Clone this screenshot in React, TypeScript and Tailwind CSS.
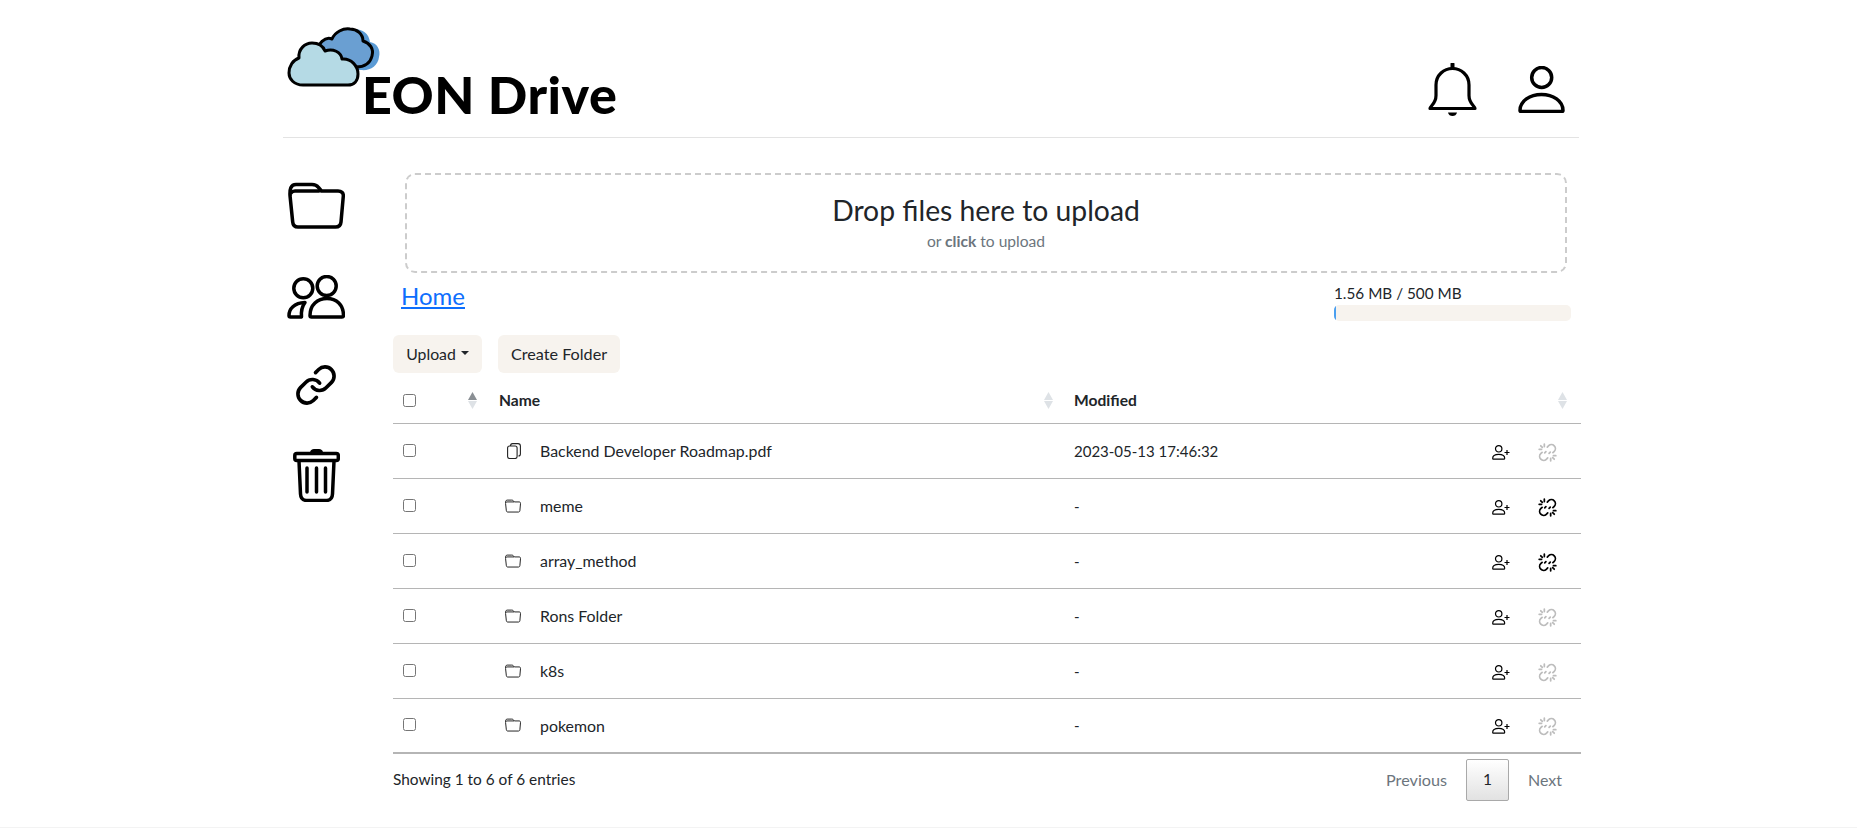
import React from "react";

function CloudLogo() {
  return (
    <svg width="96" height="64" viewBox="0 0 96 64" className="shrink-0">
      <path d="M36 30c-3-8 3-17 12-15 3-7 10-12 19-11 9 0 15 5 16 13 7 1 11 8 9 15-1 9-9 14-18 13H45z" fill="#5b9bd5" />
      <path d="M31 27c-1-8 7-16 14-13 3-7 11-11 18-10 7 0 13 5 13 12 7 2 11 8 9 15-2 8-8 11-16 11" fill="#6a9fd2" stroke="#000" strokeWidth="3" strokeLinejoin="round" />
      <path d="M16 60C7 60 2 54 2 48c0-7 4-13 10-15-1-9 6-15 13-15 6 0 11 3 13 8 8-3 16 1 17 8 9-1 16 7 16 15 0 7-4 11-10 11z" fill="#b5dae5" stroke="#000" strokeWidth="3" strokeLinejoin="round" />
    </svg>
  );
}

function Bell() {
  return (
    <svg width="50" height="54" viewBox="0 0 50 54" fill="none" stroke="#000" strokeWidth="3.200" strokeLinejoin="round" strokeLinecap="round">
      <path d="M2 45.500h45c0-2.500-6-4.500-6-13V22C41 12 33 5.500 24.500 5.500S8 12 8 22v10.500c0 8.500-6 10.500-6 13z" />
      <path d="M24.500 1v4" strokeWidth="4" />
      <path d="M20 49.500h9c-.5 2.500-2.300 3.500-4.500 3.500S20.500 52 20 49.500z" fill="#000" stroke="none" />
    </svg>
  );
}

function Person() {
  return (
    <svg width="47" height="47" viewBox="0 0 47 47" fill="none" stroke="#000" strokeWidth="3.500" strokeLinejoin="round">
      <circle cx="23.700" cy="11.500" r="10" />
      <path d="M2 44.500c0-9.500 10-16 21.500-16s21.500 6.500 21.500 16c0 .5-.5 1-1 1H3c-.5 0-1-.5-1-1z" />
    </svg>
  );
}

function FolderBig({ w, h, sw, color = "#000" }: { w: number; h: number; sw: number; color?: string }) {
  return (
    <svg width={w} height={h} viewBox="0 0 57 46" fill="none" stroke={color} strokeWidth={sw} strokeLinejoin="round" strokeLinecap="round">
      <path d="M2 13C1.700 7 2.500 2 8 2h16c3 0 5 1 6.500 3l3 3.500H50c3.500 0 5.500 2 5.300 5l-2.300 26c-.3 3.500-2.500 5-5.500 5H10c-3 0-5-1.500-5.300-5z" />
      <path d="M3 10.500c1-1.500 2.500-2 4-2h24" />
    </svg>
  );
}

function Users() {
  return (
    <svg width="58" height="44" viewBox="0 0 58 44" fill="none" stroke="#000" strokeWidth="3.500" strokeLinejoin="round">
      <circle cx="16.300" cy="13.300" r="9.500" />
      <circle cx="39.700" cy="11" r="9.500" />
      <path d="M23 40.500c0-10.500 7.500-17 17-17s16.500 6.500 16.500 17c0 1-.5 1.500-1.500 1.500H24.500c-1 0-1.500-.5-1.500-1.500z" />
      <path d="M2 40.500C2 34 7 28 18 27.500c-3 4-4 9-3.500 14.500H3.500C2.500 42 2 41.500 2 40.500z" />
    </svg>
  );
}

function ChainLink() {
  return (
    <svg width="40" height="40" viewBox="1 1 22 22" fill="none" stroke="#000" strokeWidth="2" strokeLinecap="round" strokeLinejoin="round">
      <path d="M10 13a5 5 0 0 0 7.540.540l3-3a5 5 0 0 0-7.070-7.070l-1.720 1.710" />
      <path d="M14 11a5 5 0 0 0-7.540-.540l-3 3a5 5 0 0 0 7.070 7.070l1.710-1.710" />
    </svg>
  );
}

function Trash() {
  return (
    <svg width="47" height="54" viewBox="0 0 47 54" fill="none" stroke="#000" strokeWidth="3.500" strokeLinejoin="round" strokeLinecap="round">
      <path d="M17 5c0-3 2-4 4-4h5c2 0 4 1 4 4z" fill="#000" stroke="none" />
      <rect x="1.800" y="5.500" width="43.500" height="7" rx="2" />
      <path d="M6 13l1.500 33c.2 4 2.500 6.400 6 6.400h20c3.500 0 5.800-2.400 6-6.400L41 13" />
      <path d="M14 20v24M23.500 20v24M32.500 20v24" />
    </svg>
  );
}

function PersonPlus() {
  return (
    <svg width="18" height="15" viewBox="0 0 18 15" fill="none" stroke="#000" strokeWidth="1.200" strokeLinejoin="round">
      <circle cx="6.700" cy="3.800" r="3.200" />
      <path d="M.7 13.300c0-2.500 2.700-4 6-4s6 1.500 6 4c0 .6-.3.900-.8.900H1.500c-.5 0-.8-.3-.8-.9z" />
      <path d="M12.500 7.500h5M15 5v5" />
    </svg>
  );
}

function BrokenLink({ color }: { color: string }) {
  return (
    <svg width="19" height="19" viewBox="0 0 24 24" fill="none" stroke={color} strokeWidth="2.200" strokeLinecap="round" strokeLinejoin="round">
      <path d="m18.840 12.250 1.720-1.710a5 5 0 0 0-7.070-7.070l-1.720 1.710" />
      <path d="m5.170 11.750-1.710 1.710a5 5 0 0 0 7.070 7.070l1.710-1.710" />
      <path d="M15.500 11.500 14 13M10 11l-1.500 1.500" />
      <path d="M8 1.500v3M1.500 8h3M3.500 3.500l2 2M16 19.500v3M19.500 16h3M18.500 18.500l2 2" />
    </svg>
  );
}

function CopyFile() {
  return (
    <svg width="14" height="16" viewBox="0 0 14 16" fill="none" stroke="#222" strokeWidth="1.100" strokeLinejoin="round">
      <rect x=".6" y="3" width="9.500" height="12.500" rx="2" />
      <path d="M3.500 3c0-1.500.7-2.400 2-2.400h5.500c1.500 0 2.400.9 2.400 2.400v8c0 1.200-.8 2-2 2" />
    </svg>
  );
}

function Sort({ up }: { up: string }) {
  return (
    <svg width="9" height="17" viewBox="0 0 9 17" className="shrink-0">
      <path d="M4.500 0L9 8H0z" fill={up} />
      <path d="M4.500 17L9 9H0z" fill="#dee2e6" />
    </svg>
  );
}

const rows = [
  { name: "Backend Developer Roadmap.pdf", mod: "2023-05-13 17:46:32", file: true, active: false },
  { name: "meme", mod: "-", file: false, active: true },
  { name: "array_method", mod: "-", file: false, active: true },
  { name: "Rons Folder", mod: "-", file: false, active: false },
  { name: "k8s", mod: "-", file: false, active: false },
  { name: "pokemon", mod: "-", file: false, active: false },
];

function Check() {
  return <span className="block w-[13px] h-[13px] rounded-[2.500px] border border-[#767676] bg-white" />;
}

export default function App() {
  return (
    <div className="w-[1857px] h-[828px] overflow-hidden bg-white text-[#212529] text-[15.500px] border-b border-[#f3f3f3]" style={{ fontFamily: '"Lato", "Liberation Sans", sans-serif' }}>
      <div className="w-[1296px] ml-[283px]">
        <header className="h-[138px] border-b border-[#e3e3e3] flex items-start justify-between">
          <div className="flex items-start pl-[4px] pt-[25px]">
            <CloudLogo />
            <span className="-ml-[21px] mt-[39px] text-[52px] leading-[60px] font-black text-black tracking-[0.500px] whitespace-nowrap">EON Drive</span>
          </div>
          <div className="flex items-start pt-[63px] pr-[14px]">
            <Bell />
            <div className="ml-[40px] mt-[3px]"><Person /></div>
          </div>
        </header>

        <div className="flex">
          <nav className="w-[110px] shrink-0 pt-[44px]">
            <div className="w-[66px] flex flex-col items-center">
              <FolderBig w={57} h={47} sw={3.500} />
              <div className="mt-[46px]"><Users /></div>
              <div className="mt-[46px]"><ChainLink /></div>
              <div className="mt-[43px]"><Trash /></div>
            </div>
          </nav>

          <main className="w-[1188px] shrink-0 pt-[35px]">
            <div className="ml-[12px] w-[1162px] h-[100px] rounded-[10px] border-2 border-dashed border-[#cccccc] flex flex-col items-center pt-[17px]">
              <div className="text-[28.300px] leading-[36px] text-[#212529]">Drop files here to upload</div>
              <div className="text-[15.600px] leading-[22px] mt-[2px] text-[#6c757d]">or <b className="font-bold">click</b> to upload</div>
            </div>

            <div className="h-[62px] flex justify-between">
              <a className="ml-[8px] mt-[5px] text-[24px] leading-[36px] text-[#0d6efd] underline">Home</a>
              <div className="w-[237px] mr-[10px] mt-[10px]">
                <div className="text-[15.300px] leading-[20px] whitespace-nowrap">1.56 MB / 500 MB</div>
                <div className="mt-[2px] h-[16px] rounded-[5px] bg-[#f7f3ee] overflow-hidden">
                  <div className="h-full w-[2px] bg-[#4a9ff0]" />
                </div>
              </div>
            </div>

            <div className="flex gap-[16px]">
              <button className="h-[38px] w-[89px] rounded-[6px] bg-[#f7f3ee] flex items-center justify-center text-[15.800px]">
                Upload
                <span className="ml-[5px] mb-[2px] border-x-[4.500px] border-x-transparent border-t-[4.500px] border-t-[#212529]" />
              </button>
              <button className="h-[38px] w-[122px] rounded-[6px] bg-[#f7f3ee] text-[16.200px]">Create Folder</button>
            </div>

            <div className="h-[51px] flex items-center border-b border-[#b5b5b5] font-bold pt-[5px] text-[15.600px]">
              <div className="w-[106px] pl-[10px] pr-[22px] flex items-center justify-between"><Check /><Sort up="#8a8f94" /></div>
              <div className="w-[575px] pr-[21px] flex items-center justify-between"><span>Name</span><Sort up="#dee2e6" /></div>
              <div className="flex-1 pr-[14px] flex items-center justify-between"><span>Modified</span><Sort up="#dee2e6" /></div>
            </div>

            {rows.map((r, i) => (
              <div key={r.name} className={`h-[55px] flex items-center ${i === rows.length - 1 ? "border-b-2 border-[#b5b5b5]" : "border-b border-[#b5b5b5]"}`}>
                <div className="w-[106px] pl-[10px] -mt-[2px]"><Check /></div>
                <div className="w-[575px] flex items-center">
                  <div className="w-[41px] pl-[6px] flex justify-start">
                    {r.file ? <div className="ml-[2px]"><CopyFile /></div> : <FolderBig w={16} h={14} sw={3.500} color="#222" />}
                  </div>
                  <span className="text-[15.900px]">{r.name}</span>
                </div>
                <div className="w-[418px] text-[15px]">{r.mod}</div>
                <div className="flex items-center mt-[2px]">
                  <PersonPlus />
                  <div className="ml-[28px]"><BrokenLink color={r.active ? "#000" : "#bdbdbd"} /></div>
                </div>
              </div>
            ))}

            <div className="flex items-start justify-between mt-[5px]">
              <div className="mt-[9px] text-[15.400px]">Showing 1 to 6 of 6 entries</div>
              <div className="flex items-center pr-[19px]">
                <span className="text-[#6c757d] text-[16.200px]">Previous</span>
                <span className="ml-[19px] w-[43px] h-[42px] rounded-[2px] border border-[#a9a9a9] bg-gradient-to-b from-white to-[#e2e2e2] flex items-center justify-center">1</span>
                <span className="ml-[19px] text-[#6c757d] text-[16px]">Next</span>
              </div>
            </div>
          </main>
        </div>
      </div>
    </div>
  );
}
